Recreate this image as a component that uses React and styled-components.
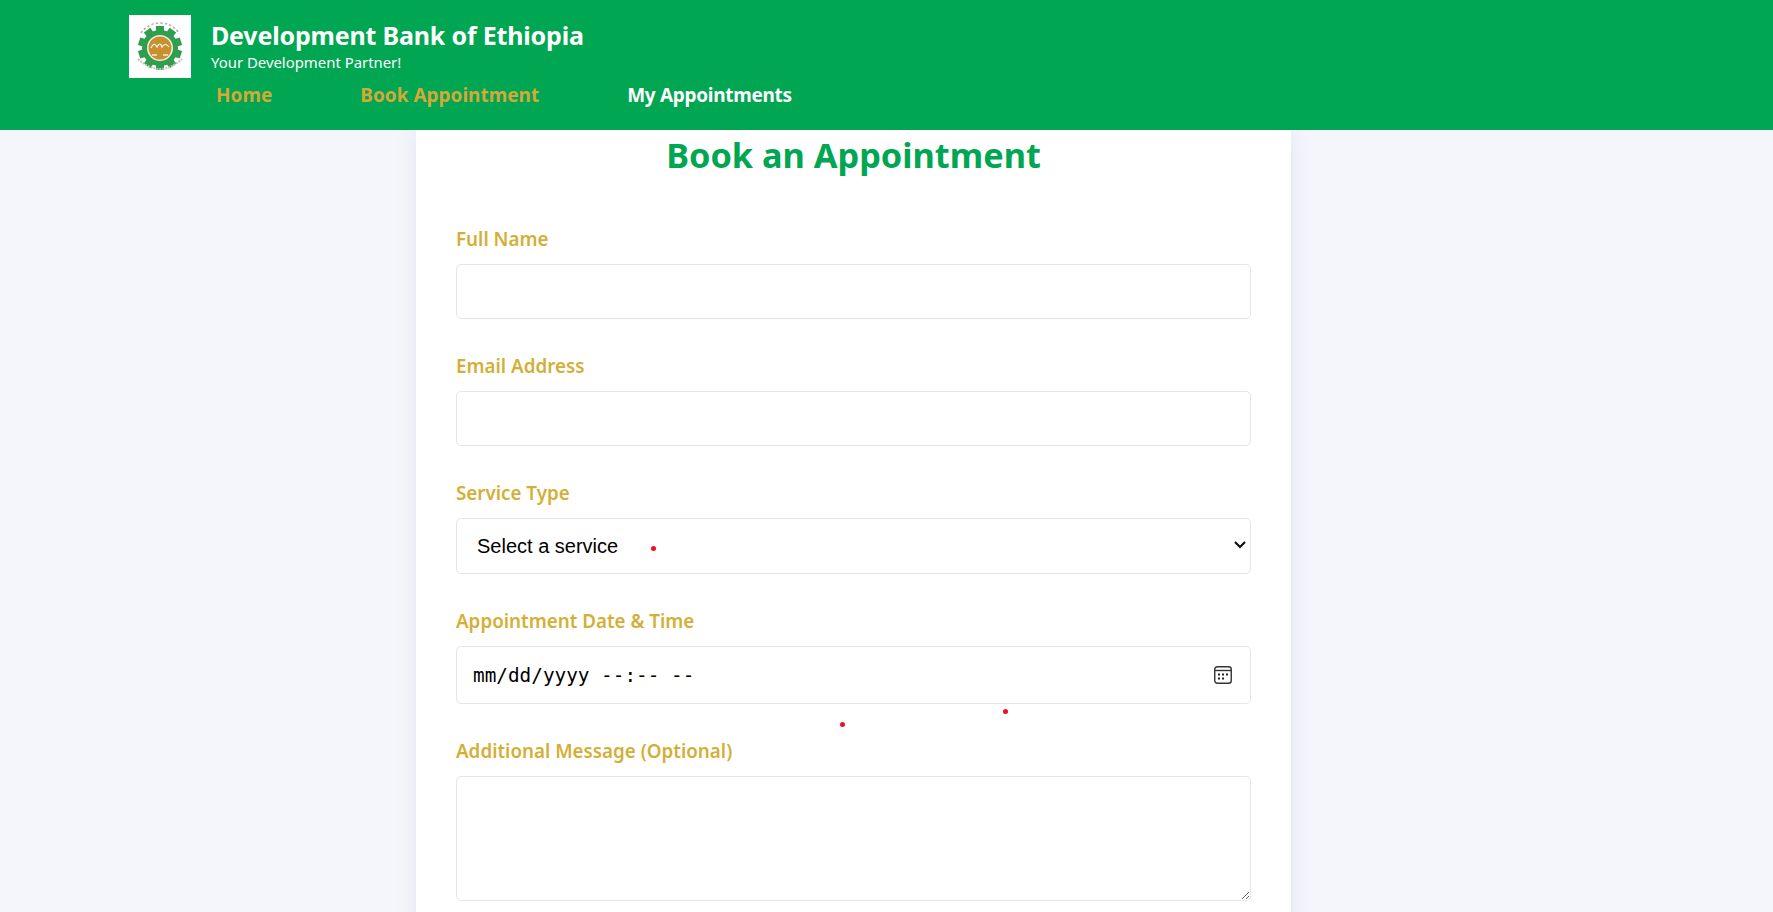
import React from 'react'
import styled, { createGlobalStyle } from 'styled-components'

const Global = createGlobalStyle`
    * { box-sizing: border-box; }
    html, body {
        margin: 0;
        height: 912px;
        overflow: hidden;
        background: #f4f6fb;
        font-family: "Noto Sans", "Open Sans", sans-serif;
    }
`

const Header = styled.header`
    position: relative;
    z-index: 2;
    height: 130px;
    background: #00a651;
    padding: 15px 0 0 129px;
`

const Brand = styled.div`
    display: flex;
    align-items: center;
    gap: 20px;
`

const LogoBox = styled.div`
    width: 62px;
    height: 63px;
    background: #fff;
    display: flex;
    align-items: center;
    justify-content: center;
`

const BrandText = styled.div`
    display: flex;
    flex-direction: column;
    margin-bottom: 3px;
    color: #fff;
`

const BrandTitle = styled.h1`
    margin: 0;
    font-size: 25px;
    line-height: 34px;
    font-weight: 700;
    letter-spacing: -0.18px;
`

const BrandTag = styled.div`
    font-size: 14.9px;
    line-height: 20px;
`

const Nav = styled.nav`
    display: flex;
    gap: 88px;
    padding-left: 87px;
    margin-top: 3px;
`

const NavLink = styled.a`
    font-size: 19px;
    line-height: 28px;
    font-weight: 700;
    color: ${({ $gold }) => ($gold ? '#d4a937' : '#fff')};
    letter-spacing: ${({ $gold }) => ($gold ? '0' : '-0.3px')};
`

const Card = styled.main`
    width: 875px;
    margin: 0 auto;
    transform: translateX(-33px);
    background: #fff;
    padding: 0 40px 40px;
    box-shadow: 0 0 20px rgba(60, 80, 160, 0.1);
`

const Heading = styled.h2`
    margin: 0;
    padding-top: 1px;
    font-size: 34.3px;
    line-height: 48px;
    font-weight: 700;
    text-align: center;
    color: #00a651;
`

const Form = styled.form`
    display: flex;
    flex-direction: column;
    padding-top: 47px;
`

const Field = styled.div`
    display: flex;
    flex-direction: column;
    margin-bottom: 34px;
`

const Label = styled.label`
    font-size: 18.8px;
    line-height: 26px;
    font-weight: 600;
    color: #d4af37;
    margin-bottom: 12px;
`

const controlBase = `
    width: 100%;
    background: #fff;
    border: 1px solid #e1e7f0;
    border-radius: 5px;
    outline: none;
    color: #000;
`

const TextInput = styled.input`
    ${controlBase}
    height: 55px;
    padding: 0 16px;
    font-size: 18px;
`

const SelectWrap = styled.div`
    position: relative;
    height: 56px;
`

const Select = styled.select`
    ${controlBase}
    appearance: none;
    display: block;
    height: 56px;
    padding: 0 16px 0 20px;
    font-family: "Liberation Sans", Arial, sans-serif;
    font-size: 20px;
`

const Chevron = styled.svg`
    position: absolute;
    right: 4px;
    top: 21px;
    pointer-events: none;
`

const DateBox = styled.div`
    ${controlBase}
    height: 58px;
    padding: 0 18px 0 16px;
    display: flex;
    align-items: center;
    justify-content: space-between;
    font-family: "DejaVu Sans Mono", "Liberation Mono", monospace;
    font-size: 19.35px;
`

const TextArea = styled.textarea`
    ${controlBase}
    display: block;
    height: 125px;
    padding: 16px;
    font-size: 18px;
`

const Dot = styled.span`
    position: fixed;
    z-index: 3;
    width: 5px;
    height: 5px;
    border-radius: 50%;
    background: #f01020;
    left: ${({ $x }) => $x}px;
    top: ${({ $y }) => $y}px;
`

const CalendarIcon = () => (
    <svg width="18" height="18" viewBox="0 0 18 18" fill="none">
        <rect x="0.75" y="0.75" width="16.5" height="16.5" rx="2.5" stroke="#333" strokeWidth="1.4" />
        <path d="M1 4.5H17" stroke="#333" strokeWidth="1.4" />
        <g fill="#222">
            <rect x="4" y="7.5" width="2" height="2" />
            <rect x="8" y="7.5" width="2" height="2" />
            <rect x="12" y="7.5" width="2" height="2" />
            <rect x="4" y="11.5" width="2" height="2" />
            <rect x="8" y="11.5" width="2" height="2" />
        </g>
    </svg>
)

const Logo = () => {
    const teeth = Array.from({ length: 10 }, (_, i) => i * 36)
    return (
        <svg width="62" height="63" viewBox="0 0 62 63">
            <path d="M12 18 A23 23 0 0 1 50 18" fill="none" stroke="#b5b5a5" strokeWidth="1.6" strokeDasharray="2.5 2" />
            {teeth.map((a) => (
                <rect key={a} x="27" y="11" width="8" height="6" fill="#2f9e4f" transform={`rotate(${a} 31 33)`} />
            ))}
            <circle cx="31" cy="33" r="18" fill="#2f9e4f" />
            <circle cx="31" cy="33" r="13" fill="#f1efe0" />
            <circle cx="31" cy="33" r="11.5" fill="#c9902f" />
            <path d="M22 33 q3 -7 6 -1 q3 -6 5 0 q3 -5 7 0" fill="none" stroke="#fff" strokeWidth="1.2" />
            <path d="M23 40 h5 M34 40 h5" stroke="#f3ead2" strokeWidth="1.4" />
            <path d="M9 44 Q31 64 53 44" fill="none" stroke="#c4c4b4" strokeWidth="2" strokeDasharray="2 1" />
        </svg>
    )
}

const App = () => {
    return (
        <>
            <Global />
            <Header>
                <Brand>
                    <LogoBox><Logo /></LogoBox>
                    <BrandText>
                        <BrandTitle>Development Bank of Ethiopia</BrandTitle>
                        <BrandTag>Your Development Partner!</BrandTag>
                    </BrandText>
                </Brand>
                <Nav>
                    <NavLink $gold>Home</NavLink>
                    <NavLink $gold>Book Appointment</NavLink>
                    <NavLink>My Appointments</NavLink>
                </Nav>
            </Header>
            <Card>
                <Heading>Book an Appointment</Heading>
                <Form>
                    <Field>
                        <Label>Full Name</Label>
                        <TextInput type="text" />
                    </Field>
                    <Field>
                        <Label>Email Address</Label>
                        <TextInput type="email" />
                    </Field>
                    <Field>
                        <Label>Service Type</Label>
                        <SelectWrap>
                            <Select defaultValue="">
                                <option value="">Select a service</option>
                                <option value="loan">Loan Consultation</option>
                            </Select>
                            <Chevron width="14" height="12" viewBox="0 0 14 12" fill="none">
                                <path d="M2 3 L7 8 L12 3" stroke="#111" strokeWidth="2.2" />
                            </Chevron>
                        </SelectWrap>
                    </Field>
                    <Field>
                        <Label>Appointment Date &amp; Time</Label>
                        <DateBox>
                            mm/dd/yyyy --:-- --
                            <CalendarIcon />
                        </DateBox>
                    </Field>
                    <Field>
                        <Label>Additional Message (Optional)</Label>
                        <TextArea />
                    </Field>
                </Form>
            </Card>
            <Dot $x={651} $y={546} />
            <Dot $x={840} $y={722} />
            <Dot $x={1003} $y={709} />
        </>
    )
}

export default App
